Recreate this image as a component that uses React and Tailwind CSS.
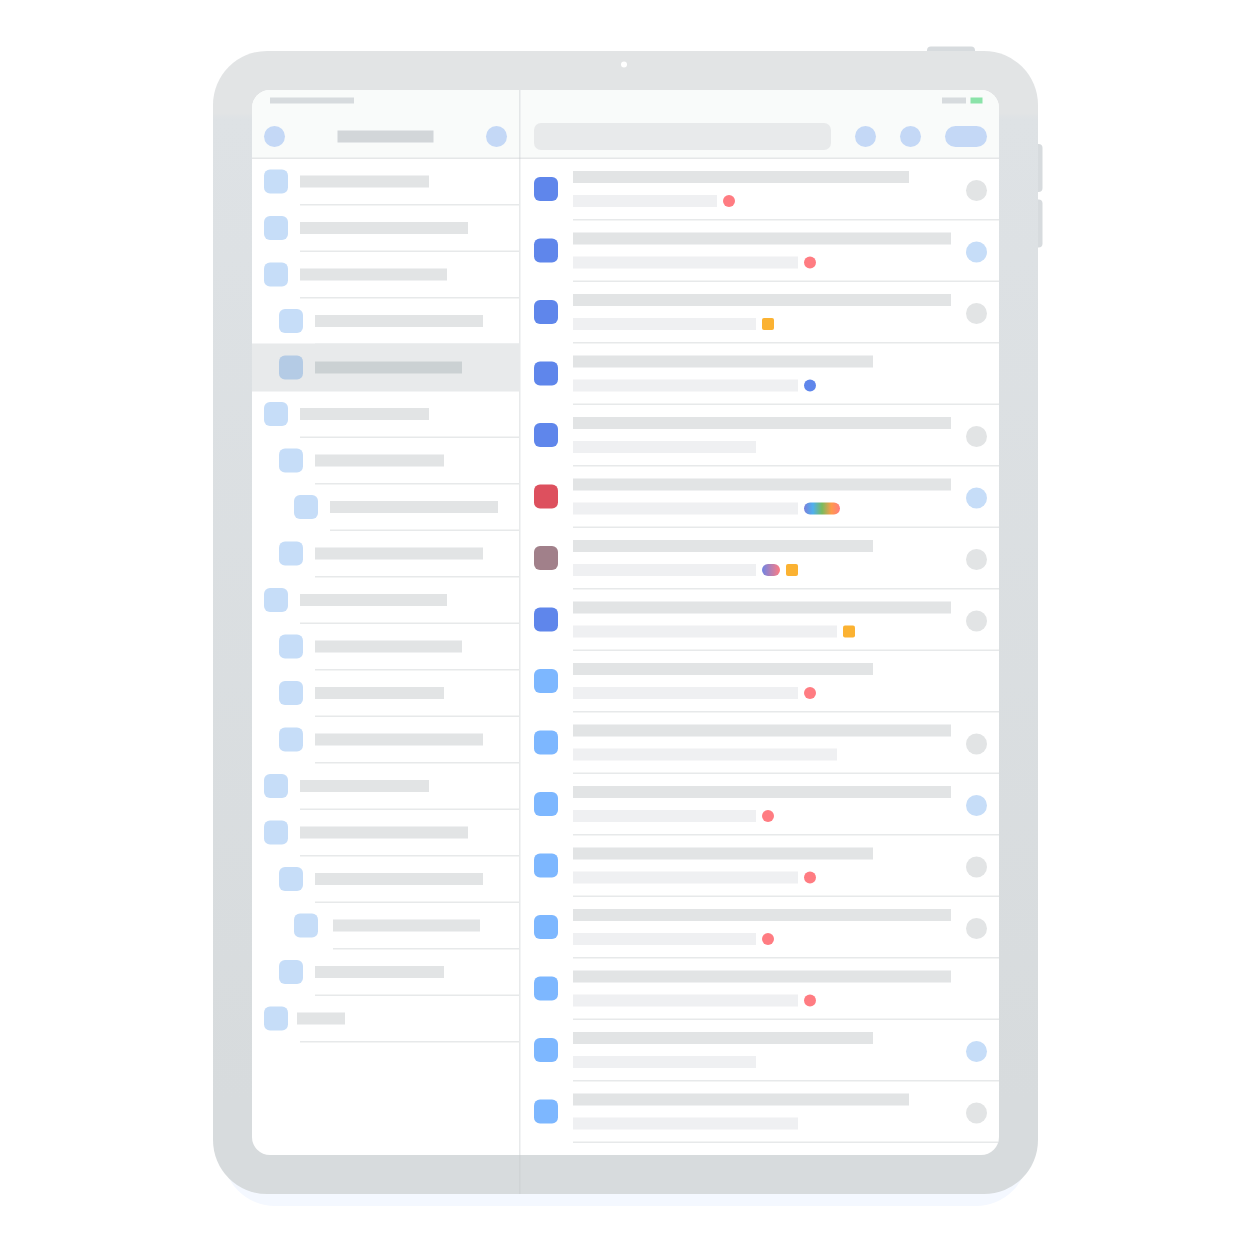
const side = [
  [12, 12, 129], [12, 12, 168], [12, 12, 147], [27, 12, 168], [27, 12, 147, true],
  [12, 12, 129], [27, 12, 129], [42, 12, 168], [27, 12, 168], [12, 12, 147],
  [27, 12, 147], [27, 12, 129], [27, 12, 168], [12, 12, 129], [12, 12, 168],
  [27, 12, 168], [42, 15, 147], [27, 12, 129], [12, 9, 48],
];

const tones = {
  blue: "bg-[#5f86eb]",
  red: "bg-[#dd505e]",
  mauve: "bg-[#a1808a]",
  sky: "bg-[#7db7ff]",
  gray: "bg-[#e2e4e5]",
  pale: "bg-[#c6ddf8]",
};

const tagStyles = {
  red: "w-3 rounded-full bg-[#ff7c82]",
  blue: "w-3 rounded-full bg-[#5f86eb]",
  amber: "w-3 rounded-[2px] bg-[#fbb232]",
  rainbow: "w-9 rounded-full bg-[linear-gradient(90deg,#7b80dc_0%,#4fb0ee_25%,#78bb5e_50%,#ff9a4a_76%,#ff7c82_100%)]",
  duo: "w-[18px] rounded-full bg-[linear-gradient(90deg,#6f84e4,#ff7c82)]",
};

const list = [
  ["blue", 336, 144, ["red"], "gray"],
  ["blue", 378, 225, ["red"], "pale"],
  ["blue", 378, 183, ["amber"], "gray"],
  ["blue", 300, 225, ["blue"], null],
  ["blue", 378, 183, [], "gray"],
  ["red", 378, 225, ["rainbow"], "pale"],
  ["mauve", 300, 183, ["duo", "amber"], "gray"],
  ["blue", 378, 264, ["amber"], "gray"],
  ["sky", 300, 225, ["red"], null],
  ["sky", 378, 264, [], "gray"],
  ["sky", 378, 183, ["red"], "pale"],
  ["sky", 300, 225, ["red"], "gray"],
  ["sky", 378, 183, ["red"], "gray"],
  ["sky", 378, 225, ["red"], null],
  ["sky", 300, 183, [], "pale"],
  ["sky", 336, 225, [], "gray"],
];

// A 1.5px rule
const Rule = ({ className = "" }) => (
  <div className={"h-[3px] shrink-0 origin-top scale-y-50 " + className} />
);

function SideRow({ item, odd }) {
  const [indent, gap, width, selected] = item;
  return (
    <div className={"relative shrink-0 " + (odd ? "h-[47px] translate-y-[0.5px]" : "h-[46px]")}>
      {selected && <div className="absolute -top-0.5 left-0 h-12 w-[267px] translate-y-[0.5px] bg-[#e8eaeb]" />}
      <div className="flex h-[45px] translate-y-[0.5px] items-start pt-2.5" style={{ paddingLeft: indent }}>
        <div className={"h-6 w-6 shrink-0 rounded-[6px] " + (selected ? "bg-[#b4cbe5]" : "bg-[#c6ddf8]")} />
        <div className={"mt-1.5 h-3 " + (selected ? "bg-[#cbd1d3]" : "bg-[#e2e4e5]")} style={{ width, marginLeft: gap }} />
      </div>
      {!selected && (
        <div style={{ paddingLeft: indent + 24 + Math.max(gap, 12) }}>
          <Rule className="bg-[#e7e9ea]" />
        </div>
      )}
    </div>
  );
}

function ListRow({ item, odd }) {
  const [icon, title, sub, tags, badge] = item;
  return (
    <div className={"shrink-0 " + (odd ? "h-[62px] translate-y-[0.5px]" : "h-[61px]")}>
      <div className="flex h-[60px] items-start pr-3 pl-[15px]">
        <div className={"mt-[18px] h-6 w-6 shrink-0 rounded-[6px] " + tones[icon]} />
        <div className="ml-[15px] grow pt-3">
          <div className="h-3 bg-[#e2e4e5]" style={{ width: title }} />
          <div className="mt-3 flex gap-1.5">
            <div className="h-3 bg-[#eff0f2]" style={{ width: sub }} />
            {tags.map((t) => <div key={t} className={"h-3 " + tagStyles[t]} />)}
          </div>
        </div>
        {badge && <div className={"mt-[21px] h-[21px] w-[21px] shrink-0 rounded-full " + tones[badge]} />}
      </div>
      <Rule className="ml-[54px] bg-[#e7e9ea]" />
    </div>
  );
}

const Dot = () => <div className="h-[21px] w-[21px] rounded-full bg-[#c4d8f6]" />;

export default function App() {
  return (
    <div className="h-[1248px] w-[1248px] overflow-hidden bg-white pt-[51px] pl-[213px]">
      <div className="relative h-[1143px] w-[825px]">
        <div className="absolute -bottom-3 left-[10px] h-[200px] w-[805px] rounded-b-[52px] bg-[#f4f8ff]" />
        <div className="absolute -top-[5px] left-[714px] h-3 w-12 translate-y-[0.5px] rounded-[4px] bg-[#d7dbde]" />
        <div className="absolute top-[93px] left-[818px] h-12 w-3 -translate-x-[0.5px] rounded-[4px] bg-[#d7dbde]" />
        <div className="absolute top-[148px] left-[818px] h-12 w-3 -translate-x-[0.5px] translate-y-[0.5px] rounded-[4px] bg-[#d7dbde]" />
        <div className="relative h-full rounded-[54px] bg-[linear-gradient(180deg,#e2e4e5_0px,#e2e4e5_62px,#dee2e5_68px,#d7dbdd_1050px)] p-[39px]">
          <div className="absolute top-[10px] left-[408px] h-1.5 w-1.5 translate-y-[0.5px] rounded-full bg-white" />
          <div className="flex h-[1065px] w-[747px] overflow-hidden rounded-[18px] bg-white">
            <div className="flex w-[267px] shrink-0 flex-col">
              <div className="h-[67px] shrink-0 bg-[#f9fbfa] pt-[7px]">
                <div className="ml-[18px] h-1.5 w-[84px] translate-y-[0.5px] bg-[#d7dbde]" />
                <div className="mt-[23px] flex items-start justify-between pr-3 pl-3">
                  <Dot />
                  <div className="mt-1 mr-px h-3 w-24 translate-x-[0.5px] translate-y-[0.5px] bg-[#d2d6d9]" />
                  <Dot />
                </div>
              </div>
              <div className="h-0.5 shrink-0 bg-[#f9fbfa]">
                <Rule className="translate-y-[0.5px] bg-[#e5e7e8]" />
              </div>
              {side.map((s, i) => <SideRow key={i} item={s} odd={i % 2 === 1} />)}
            </div>
            <div className="flex grow flex-col">
              <div className="h-[67px] shrink-0 bg-[#f9fbfa] pt-[7px]">
                <div className="flex translate-y-[0.5px] justify-end gap-1 pr-[17px]">
                  <div className="h-1.5 w-6 bg-[#d7dbde]" />
                  <div className="h-1.5 w-3 translate-x-[0.5px] bg-[#8be3a9]" />
                </div>
                <div className="mt-5 flex items-center pr-3 pl-[15px]">
                  <div className="h-[27px] w-[297px] rounded-[7px] bg-[#e8eaeb]" />
                  <div className="ml-6"><Dot /></div>
                  <div className="ml-6"><Dot /></div>
                  <div className="ml-6 h-[21px] w-[42px] rounded-full bg-[#c4d8f6]" />
                </div>
              </div>
              <div className="h-0.5 shrink-0 bg-[#f9fbfa]">
                <Rule className="translate-y-[0.5px] bg-[#e5e7e8]" />
              </div>
              {list.map((s, i) => <ListRow key={i} item={s} odd={i % 2 === 1} />)}
            </div>
          </div>
          {/* divider between the two panes */}
          <div className="absolute top-[39px] left-[306px] h-[1104px] w-[3px] origin-left scale-x-50 bg-[#c5cacc]/40" />
        </div>
      </div>
    </div>
  );
}
